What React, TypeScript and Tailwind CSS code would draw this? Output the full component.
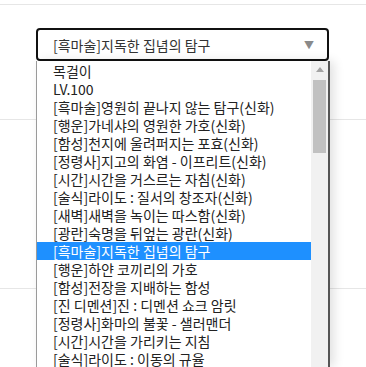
import React from 'react';

const options = [
  '목걸이',
  'LV.100',
  '[흑마술]영원히 끝나지 않는 탐구(신화)',
  '[행운]가네샤의 영원한 가호(신화)',
  '[함성]천지에 울려퍼지는 포효(신화)',
  '[정령사]지고의 화염 - 이프리트(신화)',
  '[시간]시간을 거스르는 자침(신화)',
  '[술식]라이도 : 질서의 창조자(신화)',
  '[새벽]새벽을 녹이는 따스함(신화)',
  '[광란]숙명을 뒤엎는 광란(신화)',
  '[흑마술]지독한 집념의 탐구',
  '[행운]하얀 코끼리의 가호',
  '[함성]전장을 지배하는 함성',
  '[진 디멘션]진 : 디멘션 쇼크 암릿',
  '[정령사]화마의 불꽃 - 샐러맨더',
  '[시간]시간을 가리키는 지침',
  '[술식]라이도 : 이동의 규율',
];

const selected = '[흑마술]지독한 집념의 탐구';

export default function App() {
  return (
    <div
      className="relative w-full h-[367px] overflow-hidden bg-white"
      style={{ fontFamily: '"Noto Sans CJK KR", "Noto Sans", sans-serif' }}
    >
      <div className="h-[5px] border-b border-[#e6e6e6]" />

      {/* select section */}
      <div className="h-[115px] border-b border-[#e6e6e6] pt-[23px] pl-[36px]">
        <div className="w-[293px] h-[33px] border-2 border-[#111] rounded-[4px] flex items-center pl-[15px] pr-[13px]">
          <span className="flex-1 text-[14px] text-[#333] leading-[18px] whitespace-nowrap">{selected}</span>
          <span className="text-[10px] text-[#8a8a8a] leading-none">▼</span>
        </div>
      </div>

      <div className="h-[169px] border-b border-[#e6e6e6]" />

      {/* open option list */}
      <div className="absolute left-[36px] top-[61px] w-[294px] h-[306px] bg-white border-l border-[#9a9a9a] border-r-2 border-r-[#555] shadow-[4px_0_10px_rgba(0,0,0,0.12)] flex">
        <ul className="flex-1 pt-[1px] overflow-hidden">
          {options.map(opt => (
            <li
              key={opt}
              className={
                opt === selected
                  ? 'h-[18px] pl-[16px] text-[14px] leading-[18px] bg-[#1e90ff] text-white whitespace-nowrap'
                  : 'h-[18px] pl-[16px] text-[14px] leading-[18px] text-[#222] whitespace-nowrap'
              }
            >
              {opt}
            </li>
          ))}
        </ul>
        <div className="w-[17px] bg-[#f1f1f1] flex flex-col items-center">
          <div className="h-[17px] flex items-center justify-center">
            <svg width="8" height="5" viewBox="0 0 8 5">
              <path d="M4 0 L8 5 L0 5 Z" fill="#a3a3a3" />
            </svg>
          </div>
          <div className="w-[13px] h-[73px] mt-[2px] bg-[#c1c1c1]" />
        </div>
      </div>
    </div>
  );
}
